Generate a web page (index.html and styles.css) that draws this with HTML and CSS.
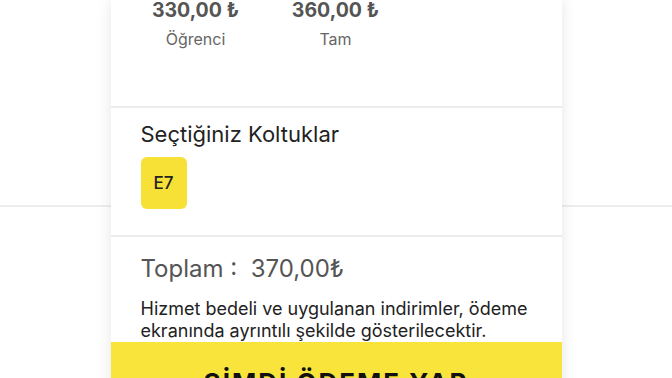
FILE: index.html
```html
<!DOCTYPE html>
<html lang="tr">
  <head>
    <meta charset="utf-8">
    <link rel="stylesheet" href="styles.css">
  </head>
  <body>
    <div class="card">
      <div class="section prices">
        <div class="price">
          <div class="amount">330,00 ₺</div>
          <div class="label">Öğrenci</div>
        </div>
        <div class="price">
          <div class="amount">360,00 ₺</div>
          <div class="label">Tam</div>
        </div>
      </div>

      <div class="section seats">
        <div class="seats-title">Seçtiğiniz Koltuklar</div>
        <div class="seat-list">
          <div class="seat">E7</div>
        </div>
      </div>

      <div class="section summary">
        <div class="total">Toplam :&nbsp; 370,00₺</div>
        <p class="note">Hizmet bedeli ve uygulanan indirimler, ödeme ekranında ayrıntılı şekilde gösterilecektir.</p>
      </div>

      <button class="pay">ŞİMDİ ÖDEME YAP</button>
    </div>
  </body>
</html>
```

FILE: styles.css
```css
html, body {
  height: 100%;
}
body {
  --yellow: #f8e43a;
  --line: #ededed;

  margin: 0;
  overflow: hidden;
  font-family: Inter, "Noto Sans", "DejaVu Sans", sans-serif;
  color: #222;
  background: linear-gradient(to bottom, #fff 205px, var(--line) 205px, var(--line) 207px, #fff 207px);
}

.card {
  width: 451px;
  margin: 0 auto;
  background: #fff;
  box-shadow: 0 0 14px rgba(0,0,0,0.10);
}

.section {
  border-bottom: 2px solid var(--line);
  box-sizing: border-box;
}

/* price row */
.prices {
  display: flex;
  padding: 0 15px;
  height: 108px;
}
.price {
  width: 140px;
  text-align: center;
}
.amount {
  font-size: 19.5px;
  font-weight: 700;
  color: #555;
  line-height: 20px;
}
.label {
  margin-top: 9px;
  font-size: 16px;
  line-height: 20px;
  color: #666;
}

/* seats */
.seats {
  height: 129px;
  padding: 13px 30px 0;
}
.seats-title {
  font-size: 22px;
  line-height: 27px;
}
.seat-list {
  display: flex;
  gap: 8px;
  margin-top: 9px;
}
.seat {
  width: 46px;
  height: 52px;
  border-radius: 6px;
  background: #f8e136;
  display: flex;
  align-items: center;
  justify-content: center;
  font-size: 17px;
  font-weight: 500;
}

/* total */
.summary {
  border-bottom: none;
  padding: 17px 30px 0;
}
.total {
  font-size: 24px;
  color: #555;
  line-height: 29px;
}
.note {
  margin: 15px 0 0;
  font-size: 18px;
  line-height: 22px;
}

.pay {
  display: block;
  width: 100%;
  height: 60px;
  border: none;
  background: var(--yellow);
  font-family: inherit;
  font-size: 26px;
  font-weight: 700;
  letter-spacing: 2px;
  color: #111;
  padding: 21px 0 0;
  text-align: center;
  vertical-align: top;
}
```
